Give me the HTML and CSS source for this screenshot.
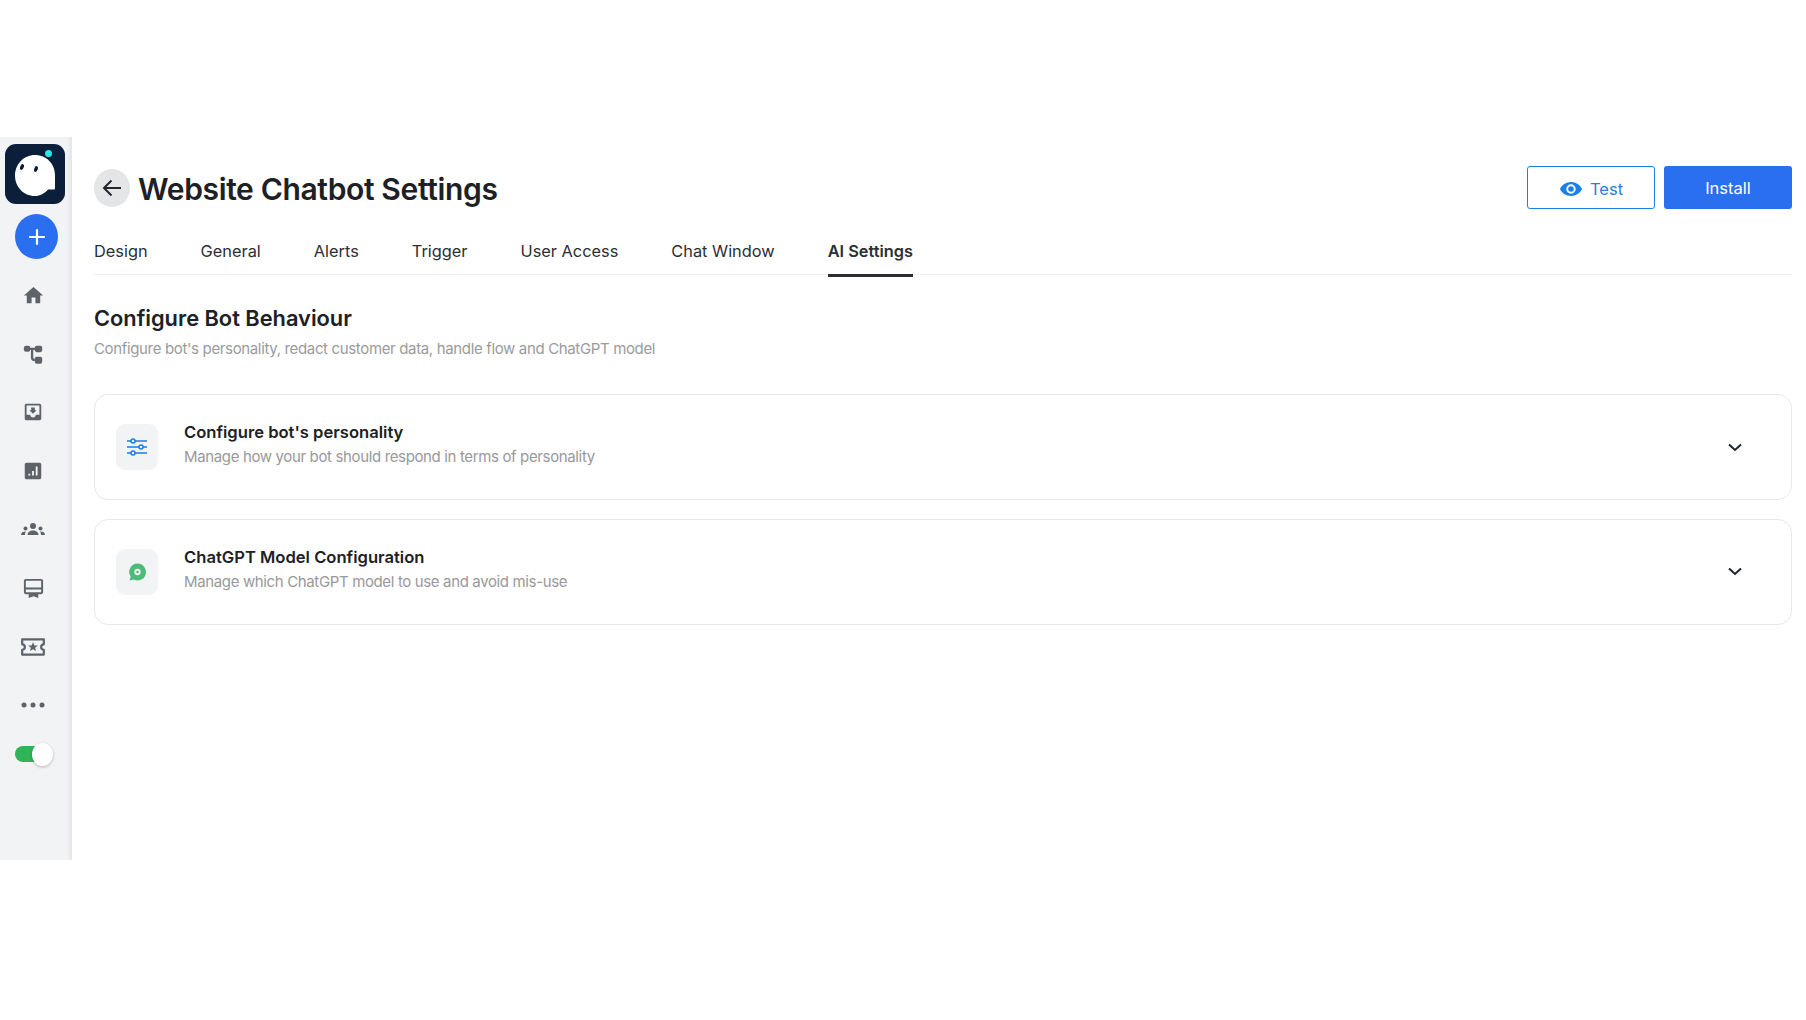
FILE: index.html
```html
<!DOCTYPE html>
<html>
<head>
	<meta charset="utf-8">
	<title>Website Chatbot Settings</title>
	<link rel="stylesheet" href="styles.css">
</head>
<body>
	<div class="app">
		<aside class="sidebar">
			<div class="logo">
				<svg viewBox="0 0 60 60" width="60" height="60">
					<path d="M10 32c0-11.500 8.500-21 20-21s20 9 20 20v13c0 1-.5 1.500-1.500 1.500H43c-3.500 4-8 6.500-13 6.500-11.500 0-20-9-20-20.500z" fill="#fff"/>
					<ellipse cx="17" cy="23" rx="1.800" ry="3" transform="rotate(20 17 23)" fill="#0b1f3a"/>
					<ellipse cx="31" cy="25" rx="1.800" ry="3" transform="rotate(20 31 25)" fill="#0b1f3a"/>
					<circle cx="43.500" cy="9.500" r="3.500" fill="#2ee6e6"/>
				</svg>
			</div>
			<button class="add-btn">
				<svg viewBox="0 0 20 20" width="20" height="20"><path d="M10 3v14M3 10h14" stroke="#fff" stroke-width="2.200" stroke-linecap="round"/></svg>
			</button>
			<nav class="side-nav">
				<div class="side-item">
					<svg viewBox="0 0 24 24" width="23" height="23"><path d="M10 20v-6h4v6h5v-8h3L12 3 2 12h3v8z"/></svg>
				</div>
				<div class="side-item">
					<svg viewBox="0 0 24 24" width="22" height="22"><rect x="2" y="3" width="7" height="6.500" rx="2.500"/><rect x="14" y="3" width="8" height="7" rx="2"/><rect x="14" y="15" width="8" height="7.500" rx="2"/><path d="M8 6.500h7M11 6.500v9.500q0 2.500 3 2.500" fill="none" stroke="#5f6368" stroke-width="2.500"/></svg>
				</div>
				<div class="side-item">
					<svg viewBox="0 0 24 24" width="22" height="22"><path d="M19 3H5c-1.100 0-2 .9-2 2v14c0 1.100.9 2 2 2h14c1.100 0 2-.9 2-2V5c0-1.100-.9-2-2-2zm0 12h-4c0 1.660-1.350 3-3 3s-3-1.340-3-3H5V5h14v10zm-3-5h-2V7h-4v3H8l4 4 4-4z"/></svg>
				</div>
				<div class="side-item">
					<svg viewBox="0 0 24 24" width="22" height="22"><path fill-rule="evenodd" d="M5 3h14c1.100 0 2 .9 2 2v14c0 1.100-.9 2-2 2H5c-1.100 0-2-.9-2-2V5c0-1.100.9-2 2-2zm2 12v2h2v-2H7zm4-3v5h2v-5h-2zm4-5v10h2V7h-2z"/></svg>
				</div>
				<div class="side-item">
					<svg viewBox="0 0 24 24" width="24" height="24"><circle cx="12" cy="8" r="3"/><path d="M6.500 17c0-3 2.500-4.500 5.500-4.500s5.500 1.500 5.500 4.500z"/><circle cx="4.500" cy="10.500" r="2"/><path d="M0 17c0-2.500 1.800-3.500 4.800-3.500-.6 1-.8 2.200-.8 3.500z"/><circle cx="19.500" cy="10.500" r="2"/><path d="M24 17c0-2.500-1.800-3.500-4.800-3.500.6 1 .8 2.200.8 3.500z"/></svg>
				</div>
				<div class="side-item">
					<svg viewBox="0 0 24 24" width="23" height="23"><path fill-rule="evenodd" d="M4 2h16c1.100 0 2 .9 2 2v12c0 1.100-.9 2-2 2h-3v4l-5-2-5 2v-4H4c-1.100 0-2-.9-2-2V4c0-1.100.9-2 2-2zm0 2v7h16V4H4zm0 9v3h16v-3H4z"/></svg>
				</div>
				<div class="side-item">
					<svg viewBox="0 0 24 24" width="26" height="26"><path d="M2 5h20v4.500a2.500 2.500 0 0 0 0 5V19H2v-4.500a2.500 2.500 0 0 0 0-5z" fill="none" stroke="#5f6368" stroke-width="2" stroke-linejoin="round"/><path d="M12 7.500l1.300 3 3.200.2-2.500 2 .8 3.100-2.800-1.700-2.800 1.700.8-3.100-2.500-2 3.200-.2z"/></svg>
				</div>
				<div class="side-item">
					<svg viewBox="0 0 24 24" width="24" height="24"><circle cx="3" cy="12" r="2.500"/><circle cx="12" cy="12" r="2.500"/><circle cx="21" cy="12" r="2.500"/></svg>
				</div>
			</nav>
			<div class="toggle"><span class="knob"></span></div>
		</aside>

		<main class="main">
			<header class="top">
				<div class="title-wrap">
					<button class="back-btn">
						<svg viewBox="0 0 24 24" width="24" height="24"><path d="M21 12H4M11.500 4.500L4 12l7.500 7.500" fill="none" stroke="#22262b" stroke-width="2"/></svg>
					</button>
					<h1>Website Chatbot Settings</h1>
				</div>
				<div class="actions">
					<button class="btn btn-outline">
						<svg viewBox="0 0 24 24" width="24" height="24"><path fill="#1a7fe6" d="M12 5C7 5 2.700 8.100 1 12c1.700 3.900 6 7 11 7s9.300-3.100 11-7c-1.700-3.900-6-7-11-7zm0 11.700a4.700 4.700 0 1 1 0-9.400 4.700 4.700 0 0 1 0 9.400zm0-7.500a2.800 2.800 0 1 0 0 5.600 2.800 2.800 0 0 0 0-5.600z"/></svg>
						Test
					</button>
					<button class="btn btn-solid">Install</button>
				</div>
			</header>

			<nav class="tabs">
				<a class="tab">Design</a>
				<a class="tab">General</a>
				<a class="tab">Alerts</a>
				<a class="tab">Trigger</a>
				<a class="tab">User Access</a>
				<a class="tab">Chat Window</a>
				<a class="tab active">AI Settings</a>
			</nav>

			<h2>Configure Bot Behaviour</h2>
			<p class="lead">Configure bot's personality, redact customer data, handle flow and ChatGPT model</p>

			<section class="cards">
				<div class="card">
					<div class="card-icon">
						<svg viewBox="0 0 22 20" width="22" height="20"><path d="M1 4h20M1 10h20M1 16h20" stroke="#1a7fe6" stroke-width="1.300"/><circle cx="7" cy="4" r="2" fill="#f1f3f5" stroke="#1a7fe6" stroke-width="1.500"/><circle cx="15" cy="10" r="2" fill="#f1f3f5" stroke="#1a7fe6" stroke-width="1.500"/><circle cx="7" cy="16" r="2" fill="#f1f3f5" stroke="#1a7fe6" stroke-width="1.500"/></svg>
					</div>
					<div class="card-text">
						<h3>Configure bot's personality</h3>
						<p>Manage how your bot should respond in terms of personality</p>
					</div>
					<svg class="chevron" viewBox="0 0 14 9" width="14" height="9"><path d="M1 1.500l6 5.500 6-5.500" fill="none" stroke="#1d2530" stroke-width="2"/></svg>
				</div>
				<div class="card">
					<div class="card-icon">
						<svg viewBox="0 0 18 18" width="19" height="20"><path fill-rule="evenodd" fill="#4cbb78" d="M9 1a8 8 0 1 1-3.500 15.200L1.500 17l1-3.600A8 8 0 0 1 9 1zm0 5a3 3 0 1 0 0 6 3 3 0 0 0 0-6z"/><circle cx="9" cy="9" r="1.200" fill="#4cbb78"/></svg>
					</div>
					<div class="card-text">
						<h3>ChatGPT Model Configuration</h3>
						<p>Manage which ChatGPT model to use and avoid mis-use</p>
					</div>
					<svg class="chevron" viewBox="0 0 14 9" width="14" height="9"><path d="M1 1.500l6 5.500 6-5.500" fill="none" stroke="#1d2530" stroke-width="2"/></svg>
				</div>
			</section>
		</main>
	</div>
</body>
</html>
```
FILE: styles.css
```css
* {
	box-sizing: border-box;
}
body {
	margin: 0;
	background: #fff;
	font-family: Inter, "Liberation Sans", sans-serif;
	color: #1f2328;
}
button {
	font-family: inherit;
	cursor: pointer;
}
.app {
	display: flex;
	margin-top: 137px;
}

/* sidebar */
.sidebar {
	width: 72px;
	height: 723px;
	flex: none;
	background: #f1f3f5;
	box-shadow: inset -6px 0 6px -6px #d5d7da;
	padding-top: 7px;
}
.logo {
	width: 60px;
	height: 60px;
	margin-left: 5px;
	border-radius: 11px;
	background: #0b1f3a;
}
.add-btn {
	display: flex;
	align-items: center;
	justify-content: center;
	width: 43px;
	height: 45px;
	margin: 10px 0 0 15px;
	padding: 0;
	border: 0;
	border-radius: 50%;
	background: #2a6ff0;
}
.side-nav {
	margin-top: 7px;
}
.side-item {
	display: flex;
	align-items: center;
	justify-content: center;
	width: 66px;
	height: 58.600px;
}
.side-item svg {
	fill: #5f6368;
}
.toggle {
	position: relative;
	width: 24px;
	height: 16px;
	margin: 11px 0 0 15px;
	border-radius: 8px 0 0 8px;
	background: #30b457;
}
.knob {
	position: absolute;
	left: 17px;
	top: -3px;
	width: 21px;
	height: 23px;
	border-radius: 50%;
	background: #fff;
	box-shadow: 0 1px 3px rgba(0, 0, 0, 0.25);
}

/* main */
.main {
	flex: 1;
	min-width: 0;
	padding: 29px 14px 0 22px;
}
.top {
	display: flex;
	justify-content: space-between;
	height: 43px;
}
.title-wrap {
	display: flex;
	align-items: center;
	gap: 8px;
	height: 46px;
}
.back-btn {
	display: flex;
	align-items: center;
	justify-content: center;
	width: 36px;
	height: 38px;
	margin-top: -2px;
	padding: 0;
	border: 0;
	border-radius: 50%;
	background: #e4e5e7;
}
h1 {
	margin: 0;
	font-size: 30px;
	line-height: 38px;
	font-weight: 600;
	letter-spacing: -0.350px;
	color: #1d2025;
}
.actions {
	display: flex;
	gap: 9px;
}
.btn {
	display: flex;
	align-items: center;
	justify-content: center;
	gap: 7px;
	width: 128px;
	height: 43px;
	border-radius: 3px;
	font-size: 16.500px;
}
.btn-outline {
	padding-top: 3px;
	border: 1px solid #1a7fe6;
	background: #fff;
	color: #2b80dc;
}
.btn-solid {
	padding-top: 1px;
	border: 0;
	background: #2a6ff0;
	color: #fff;
}

.tabs {
	display: flex;
	gap: 53px;
	margin-top: 27px;
	border-bottom: 1px solid #eef0f1;
}
.tab {
	padding-bottom: 8px;
	margin-bottom: -3px;
	border-bottom: 3px solid transparent;
	font-size: 16.350px;
	line-height: 30px;
	color: #2b2f33;
}
.tab.active {
	border-bottom-color: #2b2d30;
	font-weight: 600;
}

h2 {
	margin: 29px 0 0;
	font-size: 21.800px;
	line-height: 28px;
	font-weight: 600;
	color: #1d2025;
}
.lead {
	margin: 7px 0 0;
	font-size: 15px;
	line-height: 20px;
	letter-spacing: -0.350px;
	color: #9a9b9d;
}

.cards {
	display: flex;
	flex-direction: column;
	gap: 18.500px;
	margin-top: 35px;
}
.card {
	display: flex;
	align-items: flex-start;
	padding: 29px 49px 29px 21px;
	border: 1px solid #e7e8ea;
	border-radius: 14px;
}
.card-icon {
	display: flex;
	align-items: center;
	justify-content: center;
	width: 42px;
	height: 46px;
	flex: none;
	border-radius: 9px;
	background: #f1f3f5;
}
.card-text {
	flex: 1;
	margin: -4px 0 0 26px;
}
h3 {
	margin: 0;
	font-size: 16.600px;
	line-height: 24px;
	font-weight: 600;
	color: #1d2025;
}
.card-text p {
	margin: 1px 0 0;
	font-size: 15px;
	line-height: 24px;
	letter-spacing: -0.360px;
	color: #98999b;
}
.chevron {
	align-self: center;
	margin-left: 16px;
}
```
